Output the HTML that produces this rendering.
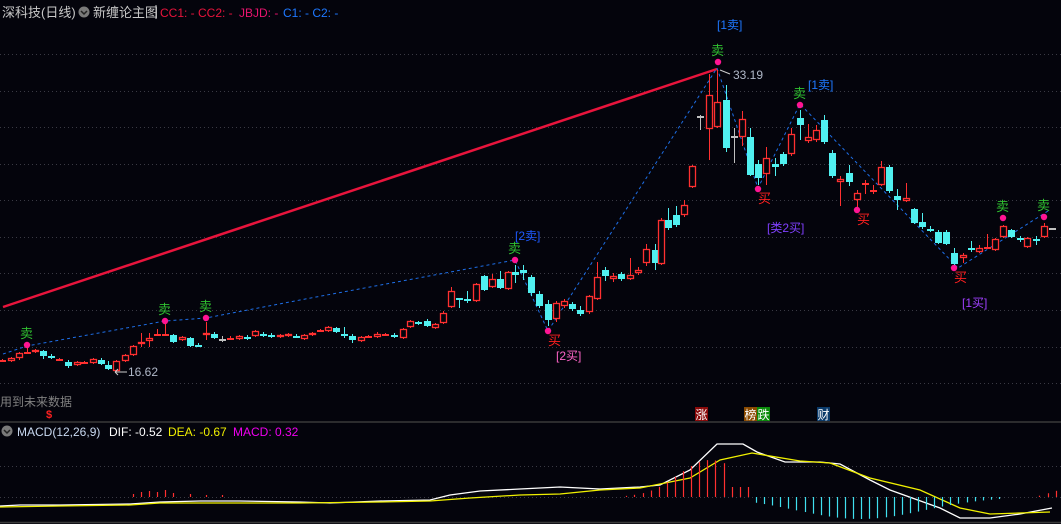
<!DOCTYPE html>
<html><head><meta charset="utf-8">
<style>
html,body{margin:0;padding:0;background:#04040c;}
#w{position:relative;width:1061px;height:524px;overflow:hidden;background:#04040c;font-family:"Liberation Sans","Noto Sans CJK SC",sans-serif;}
svg{position:absolute;left:0;top:0;}
</style></head><body>
<div id="w">
<svg id="s" width="1061" height="524" xmlns="http://www.w3.org/2000/svg" font-family="Liberation Sans, Noto Sans CJK SC, sans-serif">
<g id="grid" stroke="#3a3a44" stroke-width="1" stroke-dasharray="1,3"></g>
<line x1="0" y1="422" x2="1061" y2="422" stroke="#3a3a3a" stroke-width="1.5"/>
<line x1="0" y1="522.5" x2="1061" y2="522.5" stroke="#3a3a3a" stroke-width="1.5"/>
<polyline points="3,307 717,69" fill="none" stroke="#e8143c" stroke-width="2.5"/>
<polyline points="3,354 27,346 165,321 206,318 300,300 515,260 548,331 717,68 758,188 800,104 958,268 1048,211" fill="none" stroke="#1e6ee6" stroke-width="1" stroke-dasharray="3,3"/>
<g id="candles"></g>
<g id="macd"></g>
<text x="2" y="17" font-size="13" fill="#c8c8c8">深科技(日线)</text>
<circle cx="84" cy="12" r="5.5" fill="#7a7a7a"/>
<path d="M81,11 l3,3 l3,-3" stroke="#222" stroke-width="1.5" fill="none"/>
<text x="93" y="17" font-size="13" fill="#c8c8c8">新缠论主图</text>
<line x1="156" y1="5" x2="156" y2="19" stroke="#ccc"/>
<text x="160" y="17" font-size="12" fill="#e8143c">CC1: -  CC2: -  </text>
<text x="239" y="17" font-size="12" fill="#e8146e">JBJD: -</text>
<text x="283" y="17" font-size="12" fill="#1e78ff">C1: -  C2: -</text>
<text x="0" y="406" font-size="12" fill="#808080">用到未来数据</text>
<text x="46" y="418" font-size="11" fill="#ff2020" font-weight="bold">$</text>
<rect x="695" y="407" width="13" height="14" fill="#8a0a0a"/><text x="695.5" y="419" font-size="12" fill="#fff">涨</text>
<rect x="744" y="407" width="13" height="14" fill="#8a4a00"/><text x="744.5" y="419" font-size="12" fill="#fff">榜</text>
<rect x="757" y="407" width="13" height="14" fill="#0a8a0a"/><text x="757.5" y="419" font-size="12" fill="#fff">跌</text>
<rect x="817" y="407" width="13" height="14" fill="#0a3a6a"/><text x="817.5" y="419" font-size="12" fill="#fff">财</text>
<circle cx="7" cy="431" r="5.5" fill="#7a7a7a"/>
<path d="M4,430 l3,3 l3,-3" stroke="#222" stroke-width="1.5" fill="none"/>
<text x="17" y="436" font-size="12" fill="#c8d8f0">MACD(12,26,9)</text>
<text x="109" y="436" font-size="12" fill="#ffffff">DIF: -0.52</text>
<text x="168" y="436" font-size="12" fill="#f0f000">DEA: -0.67</text>
<text x="233" y="436" font-size="12" fill="#f000f0">MACD: 0.32</text>
<text x="733" y="79" font-size="12" fill="#b0b8c8">33.19</text>
<path d="M720,70 l10,4" stroke="#ccc"/>
<text x="128" y="376" font-size="12" fill="#b0b8c8">16.62</text>
<path d="M115,372 h12 M115,372 l3,-3 M115,372 l3,3" stroke="#ccc" fill="none"/>
<text x="515" y="240" font-size="12" fill="#1e5aff">[2卖]</text>
<text x="556" y="360" font-size="12" fill="#ff64c8">[2买]</text>
<text x="808" y="89" font-size="12" fill="#1e78ff">[1卖]</text>
<text x="717" y="29" font-size="12" fill="#1e78ff">[1卖]</text>
<text x="767" y="232" font-size="12" fill="#8040ff">[类2买]</text>
<text x="962" y="307" font-size="12" fill="#a040ff">[1买]</text>
<g id="marks"></g>
</svg>
</div>
<script>
var NS="http://www.w3.org/2000/svg";
function el(p,t,a,txt){var e=document.createElementNS(NS,t);for(var k in a)e.setAttribute(k,a[k]);if(txt)e.textContent=txt;p.appendChild(e);return e;}
var g=document.getElementById('grid');
[54,91,127,164,200,237,273,310,347,383,466].forEach(function(y){el(g,'line',{x1:0,x2:1061,y1:y+.5,y2:y+.5});});
el(g,'line',{x1:0,x2:1061,y1:497.5,y2:497.5});
var C=[
[2,360,361,359,362,'r'],[11,358,361,357,362,'r'],[19,353,358,352,360,'r'],[27,352,353,348,354,'r'],[35,350,352,349,353,'r'],
[43,351,356,350,359,'c'],[51,356,358,354,359,'c'],[59,359,360,358,361,'r'],[68,362,366,360,368,'c'],[77,362,365,361,366,'r'],
[84,362,363,361,364,'r'],[93,359,363,358,364,'r'],[101,360,364,358,365,'c'],[108,365,369,361,370,'c'],[116,361,371,360,372,'r'],
[125,355,361,354,362,'r'],[133,346,355,345,356,'r'],[141,342,344,333,347,'r'],[149,338,341,333,347,'r'],[157,334,335,329,336,'r'],
[165,334,335,322,336,'r'],[173,335,342,334,343,'c'],[182,337,340,336,341,'r'],[190,338,346,337,347,'c'],[198,345,346,343,347,'c'],
[206,333,335,322,340,'r'],[214,334,338,332,339,'c'],[222,339,339,336,342,'g'],[230,338,339,336,340,'r'],[239,336,339,335,340,'r'],
[247,337,339,335,340,'c'],[255,331,336,330,337,'r'],[263,334,336,332,337,'c'],[271,335,337,333,338,'c'],[280,335,337,334,338,'r'],
[288,334,336,333,337,'r'],[296,336,337,334,338,'c'],[304,335,339,334,340,'r'],[312,333,335,332,336,'r'],[320,330,331,329,332,'r'],
[328,327,331,326,332,'r'],[336,328,332,327,333,'c'],[344,334,335,327,338,'c'],[352,336,340,334,343,'c'],[361,337,341,336,342,'r'],
[368,336,337,335,338,'r'],[377,334,337,332,338,'r'],[385,334,335,333,336,'r'],[394,335,337,333,338,'c'],[403,329,338,328,339,'r'],
[410,321,327,320,328,'r'],[418,322,324,321,325,'c'],[427,321,326,319,327,'c'],[435,324,328,323,329,'r'],[443,313,323,311,324,'r'],
[451,291,307,287,308,'r'],[459,298,299,298,308,'c'],[467,299,300,291,303,'c'],[476,284,301,283,302,'r'],[484,276,290,275,291,'c'],
[492,279,287,274,288,'r'],[500,279,288,271,289,'c'],[508,272,289,271,290,'r'],[515,272,275,265,283,'c'],[523,270,273,265,280,'c'],
[531,277,293,275,296,'c'],[539,294,306,291,308,'c'],[548,304,320,300,326,'c'],[556,303,319,301,322,'r'],[564,301,306,299,308,'r'],
[572,304,309,302,311,'c'],[580,310,314,306,316,'c'],[589,296,312,295,314,'r'],[597,277,299,262,300,'r'],[605,270,276,267,281,'c'],
[613,276,279,273,282,'r'],[621,274,279,272,281,'c'],[630,275,279,258,280,'r'],[638,270,273,267,275,'r'],[646,249,263,244,266,'r'],
[655,250,263,244,270,'c'],[661,220,264,218,265,'r'],[668,220,228,208,230,'c'],[676,215,225,206,227,'c'],[684,205,215,200,217,'r'],
[692,166,187,165,188,'r'],[700,116,116,115,130,'g'],[709,95,129,74,160,'r'],[717,102,127,70,128,'r'],[726,100,148,85,152,'c'],
[734,136,136,128,163,'g'],[742,119,137,111,146,'r'],[750,137,175,128,176,'c'],[758,164,178,160,185,'c'],[766,158,174,147,185,'r'],
[775,164,167,158,176,'c'],[783,154,164,152,166,'c'],[791,134,154,128,156,'r'],[800,118,125,110,140,'c'],[808,137,141,124,143,'r'],
[816,130,140,125,142,'r'],[824,120,142,115,144,'c'],[832,153,176,150,178,'c'],[840,179,182,176,206,'r'],[849,173,182,165,186,'c'],
[857,193,200,190,208,'r'],[865,183,184,180,194,'r'],[873,190,191,185,194,'r'],[881,167,185,161,186,'r'],[889,167,191,165,193,'c'],
[897,196,200,189,210,'c'],[906,198,201,183,202,'r'],[914,209,223,208,224,'c'],[922,222,227,213,229,'c'],[930,229,230,226,232,'c'],
[938,232,243,230,244,'c'],[946,232,244,230,245,'c'],[954,253,264,248,265,'c'],[963,255,258,253,263,'r'],[971,248,249,241,252,'c'],
[979,248,252,245,253,'r'],[987,247,248,234,249,'r'],[995,239,250,238,251,'r'],[1003,226,237,225,238,'r'],[1011,230,237,229,238,'c'],
[1020,238,239,236,242,'c'],[1027,238,247,237,248,'r'],[1036,239,240,236,245,'c'],[1044,226,237,223,238,'r'],[1052,228,228,228,228,'g']];
var cg=document.getElementById('candles');
C.forEach(function(c){var x=c[0],t=c[1],b=c[2],h=c[3],l=c[4],k=c[5];
var col=k=='r'?'#ff3030':(k=='c'?'#50f0f0':'#c0c0c0');
el(cg,'line',{x1:x+.5,x2:x+.5,y1:h,y2:l,stroke:col,'stroke-width':1});
if(b-t<2){el(cg,'rect',{x:x-3,y:t,width:7,height:2,fill:col});}
else if(k=='r'){el(cg,'rect',{x:x-2.5,y:t+.5,width:6,height:b-t-1,fill:'#04040c',stroke:col,'stroke-width':1.3});}
else el(cg,'rect',{x:x-3,y:t,width:7,height:b-t,fill:col});});
var m=document.getElementById('marks');
[[27,345],[165,321],[206,318],[515,260],[718,62],[800,105],[1003,218],[1044,217]].forEach(function(p){
el(m,'circle',{cx:p[0],cy:p[1],r:3.2,fill:'#ff1493'});
el(m,'text',{x:p[0]-7,y:p[1]-7,'font-size':13,fill:'#30c030'},'卖');});
[[548,331],[758,189],[857,210],[954,268]].forEach(function(p){
el(m,'circle',{cx:p[0],cy:p[1],r:3.2,fill:'#ff1493'});
el(m,'text',{x:p[0],y:p[1]+14,'font-size':13,fill:'#ff2020'},'买');});
var mg=document.getElementById('macd');
function pl(pts,col){el(mg,'polyline',{points:pts.map(function(p){return p.join(',')}).join(' '),fill:'none',stroke:col,'stroke-width':1.3});}
pl([[0,506],[20,505],[60,505],[130,504],[160,502],[200,501],[240,501],[300,502],[330,503],[380,501],[430,500],[450,495],[480,491],[520,489],[560,487],[600,489],[640,487],[660,485],[690,470],[717,444],[743,444],[757,452],[785,462],[820,462],[840,464],[870,480],[890,490],[940,508],[960,518],[990,518],[1020,514],[1052,508]],'#ffffff');
pl([[0,507],[60,506],[130,505],[160,503],[250,503],[300,503],[380,502],[430,501],[470,498],[520,495],[560,494],[600,490],[640,488],[690,478],[720,460],[752,453],[800,461],[830,463],[870,478],[920,490],[960,508],[990,514],[1050,512]],'#f0f000');
[[133,3],[141,5],[149,6],[157,5],[165,7],[173,4],[190,3],[206,2],[222,2]].forEach(function(b){
el(mg,'line',{x1:b[0]+.5,x2:b[0]+.5,y1:497,y2:497-b[1],stroke:'#ff3030','stroke-width':1.2});});
function hv(x){if(x<440)return 0;
if(x<=752){return -37*Math.exp(-Math.pow((x-710)/45,2));}
if(x<=1005){return 22*Math.exp(-Math.pow((x-860)/90,2));}
if(x>1035)return -3*(x-1035)/10;return 0;}
for(var x=440;x<1061;x+=8.1){var v=hv(x);if(x>730&&x<=752)v=-10;if(Math.abs(v)<1)continue;
var col=v<0?'#ff3030':'#40e0f0';el(mg,'line',{x1:Math.round(x)+.5,x2:Math.round(x)+.5,y1:497,y2:497+v,stroke:col,'stroke-width':1.2});}
</script>
</body></html>
